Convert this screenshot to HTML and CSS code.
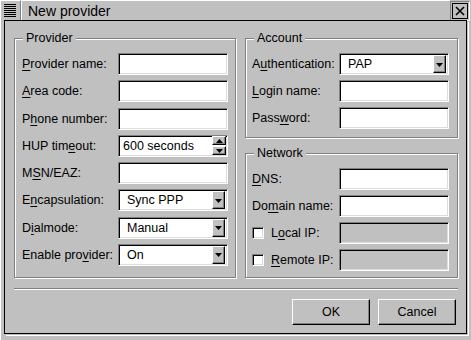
FILE: index.html
```html
<!DOCTYPE html>
<html>
<head>
<meta charset="utf-8">
<link rel="stylesheet" href="styles.css">
</head>
<body>
<div class="window">
  <div class="titlebar">
    <div class="menu-btn">
      <svg width="12" height="13" viewBox="0 0 12 13"><g fill="#000"><rect x="0" y="0" width="12" height="1"/><rect x="0" y="2" width="12" height="1"/><rect x="0" y="4" width="12" height="1"/><rect x="0" y="6" width="12" height="1"/><rect x="0" y="8" width="12" height="1"/><rect x="0" y="10" width="12" height="1"/><rect x="0" y="12" width="12" height="1"/></g></svg>
    </div>
    <div class="title">New provider</div>
    <div class="close-btn"><div class="close-box">
      <svg width="10" height="10" viewBox="0 0 10 10"><path d="M1 1L9 9M9 1L1 9" stroke="#000" stroke-width="1.6" fill="none"/></svg>
    </div></div>
  </div>
  <div class="frame">
    <div class="panel">
      <div class="columns">
        <div class="group provider">
          <span class="legend">Provider</span>
          <div class="rows spread">
            <div class="row"><label class="lbl"><u>P</u>rovider name:</label><div class="field"></div></div>
            <div class="row"><label class="lbl"><u>A</u>rea code:</label><div class="field"></div></div>
            <div class="row"><label class="lbl">P<u>h</u>one number:</label><div class="field"></div></div>
            <div class="row"><label class="lbl">HUP tim<u>e</u>out:</label>
              <div class="field spin"><span class="val">600 seconds</span>
                <div class="spin-btns">
                  <div class="sbtn"><svg width="7" height="4" viewBox="0 0 7 4"><path d="M3.5 0L7 4H0Z" fill="#000"/></svg></div>
                  <div class="sbtn"><svg width="7" height="4" viewBox="0 0 7 4"><path d="M0 0H7L3.5 4Z" fill="#000"/></svg></div>
                </div>
              </div>
            </div>
            <div class="row"><label class="lbl">M<u>S</u>N/EAZ:</label><div class="field"></div></div>
            <div class="row"><label class="lbl">E<u>n</u>capsulation:</label>
              <div class="field combo"><span class="val">Sync PPP</span><div class="cbtn"><svg width="7" height="4" viewBox="0 0 7 4"><path d="M0 0H7L3.5 4Z" fill="#000"/></svg></div></div>
            </div>
            <div class="row"><label class="lbl">D<u>i</u>almode:</label>
              <div class="field combo"><span class="val">Manual</span><div class="cbtn"><svg width="7" height="4" viewBox="0 0 7 4"><path d="M0 0H7L3.5 4Z" fill="#000"/></svg></div></div>
            </div>
            <div class="row"><label class="lbl">Enable pro<u>v</u>ider:</label>
              <div class="field combo"><span class="val">On</span><div class="cbtn"><svg width="7" height="4" viewBox="0 0 7 4"><path d="M0 0H7L3.5 4Z" fill="#000"/></svg></div></div>
            </div>
          </div>
        </div>
        <div class="right-col">
          <div class="group account">
            <span class="legend">Account</span>
            <div class="rows">
              <div class="row"><label class="lbl">A<u>u</u>thentication:</label>
                <div class="field combo"><span class="val">PAP</span><div class="cbtn"><svg width="7" height="4" viewBox="0 0 7 4"><path d="M0 0H7L3.5 4Z" fill="#000"/></svg></div></div>
              </div>
              <div class="row"><label class="lbl"><u>L</u>ogin name:</label><div class="field"></div></div>
              <div class="row"><label class="lbl">Pass<u>w</u>ord:</label><div class="field"></div></div>
            </div>
          </div>
          <div class="group network">
            <span class="legend">Network</span>
            <div class="rows">
              <div class="row"><label class="lbl"><u>D</u>NS:</label><div class="field"></div></div>
              <div class="row"><label class="lbl">Do<u>m</u>ain name:</label><div class="field"></div></div>
              <div class="row"><label class="lbl check"><span class="cbox"></span>L<u>o</u>cal IP:</label><div class="field disabled"></div></div>
              <div class="row"><label class="lbl check"><span class="cbox"></span><u>R</u>emote IP:</label><div class="field disabled"></div></div>
            </div>
          </div>
        </div>
      </div>
      <div class="separator"></div>
      <div class="buttons">
        <button class="btn">OK</button>
        <button class="btn">Cancel</button>
      </div>
    </div>
  </div>
</div>
</body>
</html>
```

FILE: styles.css
```css
* { box-sizing: border-box; }
html, body { margin: 0; padding: 0; }
body {
  background: #c0c0c0;
  font-family: "Liberation Sans", Arial, sans-serif;
  font-size: 12.5px;
  color: #000;
  width: 471px;
  height: 340px;
  overflow: hidden;
}
.window {
  width: 471px;
  height: 340px;
  display: flex;
  flex-direction: column;
}
.titlebar {
  height: 20px;
  display: flex;
  align-items: stretch;
}
.menu-btn {
  width: 21px;
  height: 20px;
  border-top: 1px solid #fff;
  border-left: 1px solid #fff;
  border-right: 1px solid #808080;
  display: flex;
  align-items: flex-start;
  padding: 3px 0 0 3px;
}
.title {
  flex: 1;
  font-size: 14px;
  line-height: 20px;
  padding-left: 6px;
  border-top: 1px solid #fff;
  border-left: 1px solid #fff;
}
.close-btn {
  width: 20px;
  height: 20px;
  margin-top: 1px;
  margin-right: 1px;
  border: 1px solid;
  border-color: #808080 #fff #fff #808080;
  padding: 1px;
}
.close-box {
  width: 100%;
  height: 100%;
  border: 1px solid #000;
  display: flex;
  align-items: center;
  justify-content: center;
}
.frame {
  flex: 1;
  display: flex;
  padding: 0 4px 6px 3px;
  border-left: 1px solid #fff;
}
.panel {
  flex: 1;
  border: 1px solid #000;
  box-shadow: 1px 1px 0 #c0c0c0, 2px 2px 0 #fff;
  padding: 17px 8px 8px 9px;
  display: flex;
  flex-direction: column;
}
.columns {
  display: flex;
  gap: 9px;
  height: 240px;
}
.group {
  position: relative;
  border: 1px solid #808080;
  box-shadow: inset 1px 1px 0 #fff, 1px 1px 0 #fff;
  display: flex;
  flex-direction: column;
}
.legend {
  position: absolute;
  top: -9px;
  left: 8px;
  padding: 0 3px;
  background: #c0c0c0;
  line-height: 16px;
}
.provider {
  width: 222px;
  height: 240px;
  padding: 14px 7px 11px 7px;
}
.right-col {
  width: 213px;
  display: flex;
  flex-direction: column;
  gap: 15px;
}
.account {
  height: 100px;
  padding: 14px 8px 0 6px;
}
.network {
  height: 125px;
  padding: 14px 8px 0 6px;
}
.rows {
  display: flex;
  flex-direction: column;
  gap: 5px;
}
.rows.spread {
  flex: 1;
  gap: 0;
  justify-content: space-between;
}
.row {
  display: flex;
  align-items: center;
  height: 22px;
}
.lbl {
  white-space: nowrap;
}
.provider .lbl { width: 96px; }
.account .lbl, .network .lbl { width: 87px; }
.lbl u { text-decoration-thickness: 1px; text-underline-offset: 2px; }
.check {
  display: flex;
  align-items: center;
}
.cbox {
  width: 12px;
  height: 12px;
  background: #fff;
  border: 1px solid;
  border-color: #808080 #fff #fff #808080;
  box-shadow: inset 1px 1px 0 #000, inset -1px -1px 0 #dcdcdc;
  margin-right: 7px;
}
.field {
  width: 110px;
  height: 22px;
  background: #fff;
  border: 1px solid;
  border-color: #808080 #fff #fff #808080;
  box-shadow: inset 1px 1px 0 #000, inset -1px -1px 0 #dcdcdc;
  display: flex;
  align-items: center;
}
.field.disabled { background: #c0c0c0; }
.val { flex: 1; white-space: nowrap; }
.spin .val { padding-left: 4px; }
.combo .val { padding-left: 7px; }
.combo { padding: 1px; }
.cbtn {
  width: 13px;
  height: 18px;
  margin-right: 1px;
  background: #c0c0c0;
  border: 1px solid;
  border-color: #fff #000 #000 #fff;
  box-shadow: inset -1px -1px 0 #808080;
  display: flex;
  align-items: center;
  justify-content: center;
  padding-top: 1px;
}
.spin-btns {
  width: 14px;
  margin-right: 1px;
  display: flex;
  flex-direction: column;
  gap: 1px;
}
.sbtn {
  height: 9px;
  background: #c0c0c0;
  border: 1px solid;
  border-color: #fff #000 #000 #fff;
  box-shadow: inset -1px -1px 0 #808080;
  display: flex;
  align-items: center;
  justify-content: center;
}
.separator {
  margin-top: 10px;
  height: 2px;
  border-top: 1px solid #808080;
  border-bottom: 1px solid #fff;
}
.buttons {
  margin-top: 9px;
  display: flex;
  justify-content: flex-end;
  gap: 8px;
  padding-right: 2px;
}
.btn {
  width: 78px;
  height: 26px;
  background: #c0c0c0;
  border: 1px solid;
  border-color: #fff #000 #000 #fff;
  box-shadow: inset -1px -1px 0 #808080;
  font-family: inherit;
  font-size: 12.5px;
  color: #000;
  padding: 0;
}
```
